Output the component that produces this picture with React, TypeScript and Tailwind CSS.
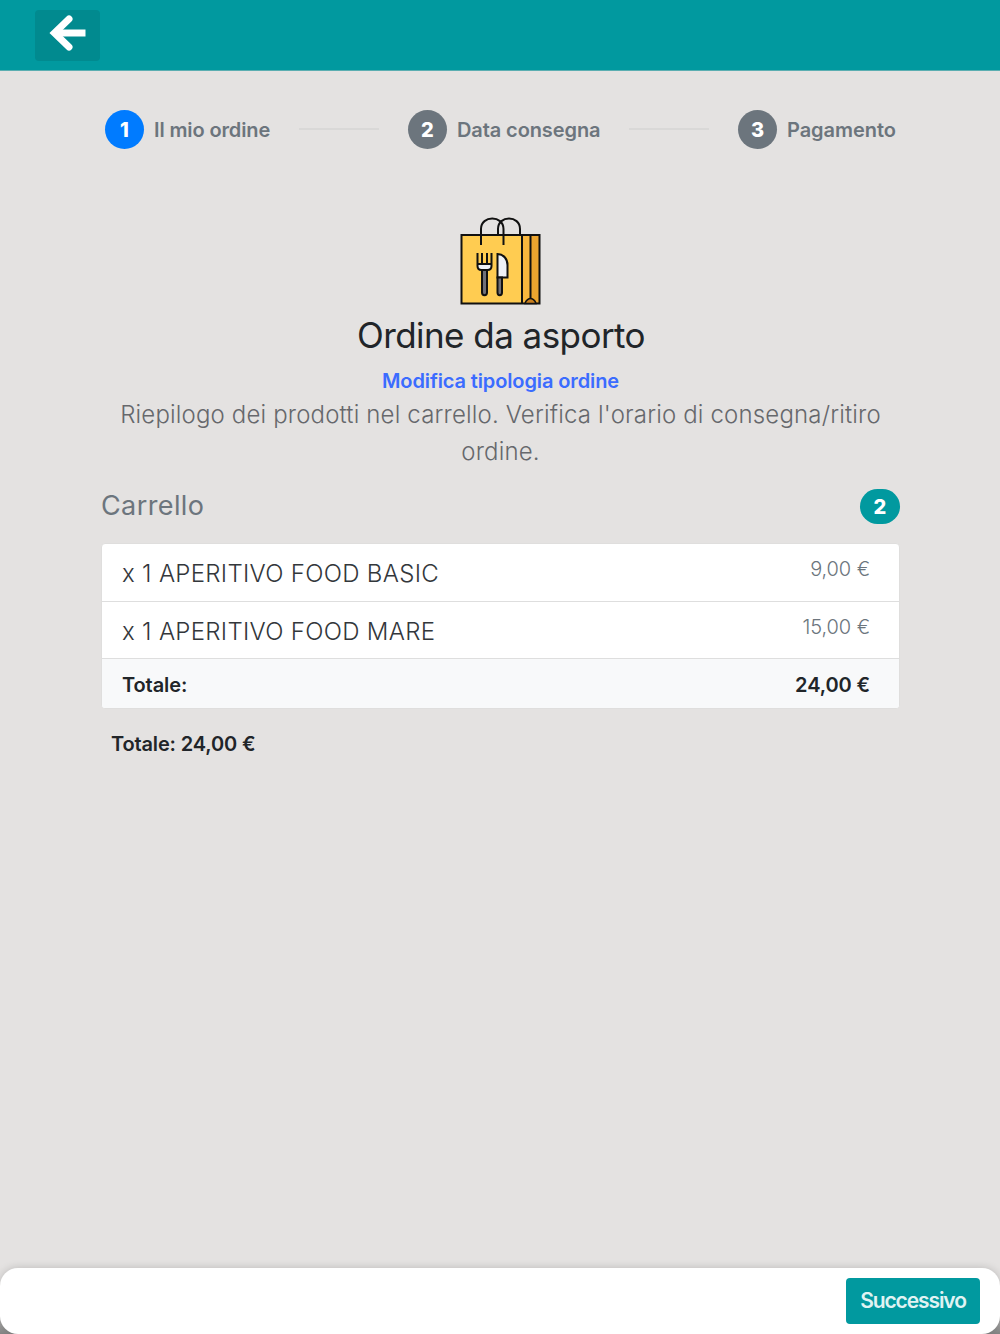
import { Fragment } from "react";

const steps = [
  { number: 1, label: "Il mio ordine", circle: "bg-[#007bff]", labelStyle: "w-[156px] tracking-[-0.12px]" },
  { number: 2, label: "Data consegna", circle: "bg-[#6c757d]", labelStyle: "w-[183px] tracking-[-0.1px]" },
  { number: 3, label: "Pagamento", circle: "bg-[#6c757d]", labelStyle: "tracking-[-0.05px]" },
];

const items = [
  { quantity: 1, name: "APERITIVO FOOD BASIC", price: "9,00 €" },
  { quantity: 1, name: "APERITIVO FOOD MARE", price: "15,00 €" },
];

function BackArrow() {
  return (
    <svg width="38" height="36" viewBox="0 0 38 36" fill="none" stroke="white" strokeWidth="7">
      <path d="M36.5 18H6" />
      <path d="M20 4L5.5 18L20 32" strokeLinecap="round" />
    </svg>
  );
}

function TakeawayBag() {
  return (
    <svg width="82" height="90" viewBox="0 0 82 90" fill="none">
      {/* Bag */}
      <path d="M2 19H63V87.5H2Z" fill="#ffcc51" />
      <path d="M63 19H71V87.5H63Z" fill="#f9b73d" />
      <path d="M71 19H79.500V87.5H71Z" fill="#eca52f" />
      <path d="M1.500 19H79.500V87.5H1.500ZM62 19V87M70.500 19V82" stroke="#111" strokeWidth="2" />
      <path d="M65 87.500C66 84 69 82.500 70.500 82.500S75 84 76 87.500Z" fill="#c87e1d" stroke="#111" strokeWidth="1.500" />
      {/* Handles */}
      <path d="M21 29V13C21 -1 43.500 -1 43.500 13V29M38 19V13C38 -1 60 -1 60 13V19" stroke="#111" strokeWidth="2" />
      {/* Fork */}
      <path d="M17.500 48H31.500V51C31.500 53 30 54 27.500 54H21.500C19 54 17.500 53 17.500 51Z" fill="#eef1f7" />
      <path d="M17.500 37V50C17.500 53 19 54 21.500 54H27.500C30 54 31.500 53 31.500 50V37M22 37V48M27 37V48M17.500 48H31.500" stroke="#111" strokeWidth="2" />
      <path d="M22 54H27V76.500C27 80 22 80 22 76.500Z" fill="#707078" stroke="#111" strokeWidth="2" />
      {/* Knife */}
      <path d="M37.500 38C43.500 38 47.500 43 47.500 49V61.500H37.500Z" fill="#eef1f7" stroke="#111" strokeWidth="2" />
      <path d="M37.500 61.500H42V76.500C42 80 37.500 80 37.500 76.500Z" fill="#707078" stroke="#111" strokeWidth="2" />
    </svg>
  );
}

export default function App() {
  return (
    <div className="flex h-[1334px] w-[1000px] flex-col bg-[#e4e2e1] font-['Inter',sans-serif] text-[#212529]">
      <header className="flex h-[71px] shrink-0 items-start border-b border-[#5baeb1] bg-[#01999f] pt-[10px] pl-[35px]">
        <button aria-label="Indietro" className="flex h-[51px] w-[65px] items-start justify-center rounded-[4px] bg-[#018a8f] pt-[5px]">
          <BackArrow />
        </button>
      </header>

      <nav className="mt-[39px] ml-[105px] flex h-[39px] items-center text-[20px] font-semibold text-[#6c757d]">
        {steps.map((step, index) => (
          <Fragment key={step.number}>
            {index > 0 && <div className="-mt-[1px] mr-[29px] -ml-[11px] h-[2px] w-[80px] shrink-0 bg-[#d9d8d7]" />}
            <div className="flex items-center">
              <span className={`flex size-[39px] items-center justify-center rounded-full text-[20px] font-extrabold text-white ${step.circle}`}>
                {step.number}
              </span>
              <span className={`ml-[10px] whitespace-nowrap ${step.labelStyle}`}>{step.label}</span>
            </div>
          </Fragment>
        ))}
      </nav>

      <main className="mx-[101px] flex flex-col">
        <section className="mt-[67px] flex flex-col items-center text-center">
          <div className="ml-[2px]">
            <TakeawayBag />
          </div>
          <h1 className="mt-[8px] ml-[2px] text-[35px] leading-[42px] font-normal tracking-[-0.55px]">Ordine da asporto</h1>
          <a href="#" className="mt-[10px] ml-[1px] text-[20px] leading-[30px] font-semibold tracking-[-0.12px] text-[#3b6cff]">
            Modifica tipologia ordine
          </a>
          <p className="ml-[1px] px-[15px] text-[24px] leading-[37px] font-light tracking-[0.16px] text-[#66686c]">
            Riepilogo dei prodotti nel carrello. Verifica l'orario di consegna/ritiro ordine.
          </p>
        </section>

        <div className="mt-[19px] flex h-[35px] items-center justify-between">
          <h2 className="text-[27px] tracking-[0.4px] text-[#6c757d]">Carrello</h2>
          <span className="-mr-[1px] flex h-[35px] w-[40px] items-center justify-center rounded-full bg-[#01999f] text-[20px] font-extrabold text-white">
            2
          </span>
        </div>

        <ul className="mt-[19px] h-[166px] w-[799px] overflow-hidden rounded-[4px] border border-[#dfdedd] bg-white">
          {items.map((item) => (
            <li key={item.name} className="flex h-[57.5px] items-start justify-between border-b border-[#dedede] pr-[29px] pl-[20px]">
              <span className="pt-[12px] text-[24px] leading-[36px] font-light tracking-[0.3px] text-[#33373b]">
                x {item.quantity} {item.name}
              </span>
              <span className="pt-[10px] text-[20px] leading-[30px] font-light tracking-[-0.1px] text-[#6c757d]">{item.price}</span>
            </li>
          ))}
          <li className="flex h-[51px] items-center justify-between bg-[#f8f9fa] pr-[29px] pl-[20px] text-[20px] font-semibold tracking-[-0.1px]">
            <span>Totale:</span>
            <span>24,00 €</span>
          </li>
        </ul>

        <p className="mt-[20px] ml-[10px] text-[20px] leading-[30px] font-semibold tracking-[-0.15px]">Totale: 24,00 €</p>
      </main>

      <div className="mt-auto bg-gradient-to-b from-[#e4e2e1] from-50% to-[#858585]">
        <footer className="flex h-[66px] items-start justify-end rounded-[18px] bg-white pt-[10px] pr-[20px] shadow-[0_0_8px_rgba(0,0,0,0.18)]">
          <button className="h-[46px] w-[134px] rounded-[4px] bg-[#01999f] text-[21px] font-semibold tracking-[-1.1px] text-[#e0f3f3]">
            Successivo
          </button>
        </footer>
      </div>
    </div>
  );
}
